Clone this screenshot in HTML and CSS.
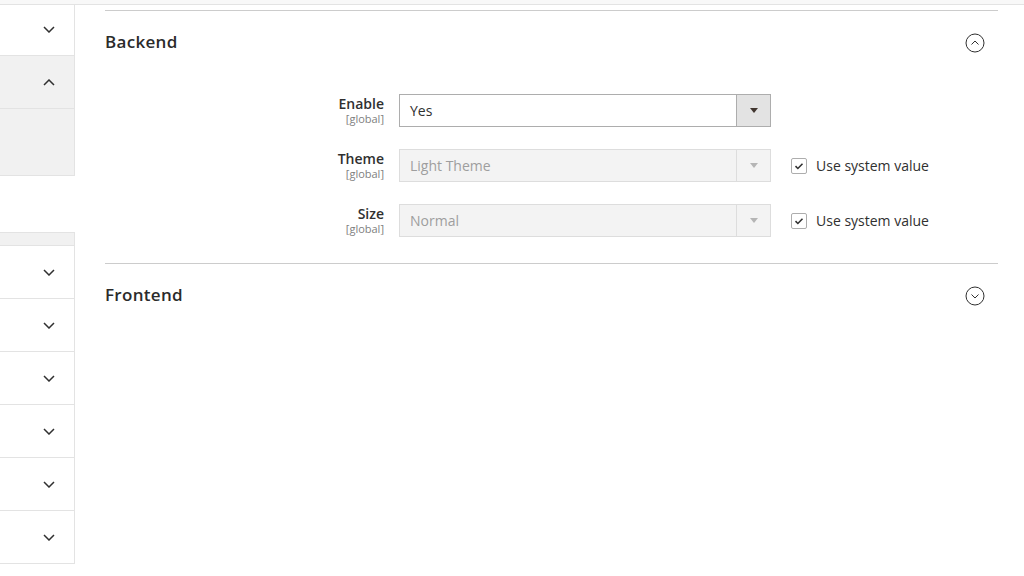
FILE: index.html
```html
<!DOCTYPE html>
<html lang="en">
<head>
<meta charset="utf-8">
<title>Config</title>
<link rel="stylesheet" href="styles.css">
</head>
<body>
<div class="topbar"></div>
<div class="layout">
  <aside class="sidebar">
    <div class="nav-item"><svg class="chev" viewBox="0 0 12 7"><path d="M1 1l5 5 5-5"/></svg></div>
    <div class="nav-item active"><svg class="chev" viewBox="0 0 12 7"><path d="M1 6l5-5 5 5"/></svg></div>
    <div class="nav-sub"></div>
    <div class="nav-gap"></div>
    <div class="nav-head"></div>
    <div class="nav-item"><svg class="chev" viewBox="0 0 12 7"><path d="M1 1l5 5 5-5"/></svg></div>
    <div class="nav-item"><svg class="chev" viewBox="0 0 12 7"><path d="M1 1l5 5 5-5"/></svg></div>
    <div class="nav-item"><svg class="chev" viewBox="0 0 12 7"><path d="M1 1l5 5 5-5"/></svg></div>
    <div class="nav-item"><svg class="chev" viewBox="0 0 12 7"><path d="M1 1l5 5 5-5"/></svg></div>
    <div class="nav-item"><svg class="chev" viewBox="0 0 12 7"><path d="M1 1l5 5 5-5"/></svg></div>
    <div class="nav-item"><svg class="chev" viewBox="0 0 12 7"><path d="M1 1l5 5 5-5"/></svg></div>
  </aside>
  <main class="main">
    <section class="section">
      <div class="section-head">
        <span class="section-title">Backend</span>
        <svg class="circle-icon" viewBox="0 0 20 20"><circle cx="10" cy="10" r="9"/><path d="M6.5 11.5l3.5-3.5 3.5 3.5"/></svg>
      </div>
      <div class="fields">
        <div class="field">
          <div class="label"><span class="label-text">Enable</span><span class="scope">[global]</span></div>
          <div class="select"><span class="select-value">Yes</span><span class="select-btn"><span class="tri"></span></span></div>
          <div class="control-extra"></div>
        </div>
        <div class="field">
          <div class="label"><span class="label-text">Theme</span><span class="scope">[global]</span></div>
          <div class="select disabled"><span class="select-value">Light Theme</span><span class="select-btn"><span class="tri"></span></span></div>
          <label class="control-extra"><span class="checkbox"><svg viewBox="0 0 16 16"><path d="M4 8.2l2.7 2.6L12 5.4"/></svg></span><span class="check-label">Use system value</span></label>
        </div>
        <div class="field">
          <div class="label"><span class="label-text">Size</span><span class="scope">[global]</span></div>
          <div class="select disabled"><span class="select-value">Normal</span><span class="select-btn"><span class="tri"></span></span></div>
          <label class="control-extra"><span class="checkbox"><svg viewBox="0 0 16 16"><path d="M4 8.2l2.7 2.6L12 5.4"/></svg></span><span class="check-label">Use system value</span></label>
        </div>
      </div>
    </section>
    <section class="section">
      <div class="section-head">
        <span class="section-title">Frontend</span>
        <svg class="circle-icon" viewBox="0 0 20 20"><circle cx="10" cy="10" r="9"/><path d="M6.5 8.5l3.5 3.5 3.5-3.5"/></svg>
      </div>
    </section>
  </main>
</div>
</body>
</html>
```

FILE: styles.css
```css
* { box-sizing: border-box; }
html, body { margin: 0; padding: 0; background: #fff; }
body {
  font-family: "Open Sans", "Liberation Sans", sans-serif;
  color: #303030;
  width: 1024px;
  height: 576px;
  overflow: hidden;
}
.topbar {
  height: 5px;
  background: #f8f8f8;
  border-bottom: 1px solid #e3e3e3;
}
.layout {
  display: flex;
  align-items: flex-start;
}
.sidebar {
  width: 75px;
  flex: none;
  display: flex;
  flex-direction: column;
}
.nav-item {
  height: 53px;
  border-right: 1px solid #e3e3e3;
  border-bottom: 1px solid #e3e3e3;
  background: #fff;
  display: flex;
  align-items: center;
  justify-content: flex-end;
  padding-right: 19px;
}
.nav-item:first-child { height: 51px; padding-bottom: 2px; }
.nav-item.active { background: #f1f1f1; }
.nav-sub {
  height: 67px;
  background: #f1f1f1;
  border-right: 1px solid #e3e3e3;
  border-bottom: 1px solid #e3e3e3;
}
.nav-gap { height: 56px; }
.nav-head {
  height: 14px;
  background: #f1f1f1;
  border-top: 1px solid #e3e3e3;
  border-right: 1px solid #e3e3e3;
  border-bottom: 1px solid #e3e3e3;
}
.chev {
  width: 12px;
  height: 7px;
  fill: none;
  stroke: #303030;
  stroke-width: 1.5;
}
.main {
  flex: 1;
  padding: 5px 26px 0 30px;
}
.section {
  border-top: 1px solid #cccccc;
}
.section-head {
  height: 62px;
  display: flex;
  align-items: center;
  justify-content: space-between;
  padding-right: 13px;
}
.section-title {
  font-size: 17px;
  font-weight: 600;
  line-height: 20px;
  letter-spacing: 0.3px;
  color: #2b2b2b;
}
.circle-icon {
  width: 20px;
  height: 20px;
  fill: none;
  stroke: #303030;
  stroke-width: 1;
  margin-top: 2px;
}
.fields {
  padding: 21px 0 26px;
  display: flex;
  flex-direction: column;
  gap: 22px;
}
.field {
  display: grid;
  grid-template-columns: 279px 372px auto;
  column-gap: 15px;
  align-items: start;
}
.label {
  display: flex;
  flex-direction: column;
  align-items: flex-end;
  text-align: right;
  padding-top: 1px;
}
.label-text {
  font-size: 14px;
  font-weight: 600;
  line-height: 18px;
  color: #303030;
}
.scope {
  font-size: 11px;
  line-height: 12px;
  color: #808080;
}
.select {
  height: 33px;
  border: 1px solid #adadad;
  background: #fff;
  display: flex;
  align-items: stretch;
}
.select-value {
  flex: 1;
  font-size: 14px;
  line-height: 31px;
  padding-left: 10px;
  color: #303030;
}
.select-btn {
  width: 34px;
  border-left: 1px solid #adadad;
  background: #e3e3e3;
  display: flex;
  align-items: center;
  justify-content: center;
}
.tri {
  width: 0;
  height: 0;
  border-left: 4px solid transparent;
  border-right: 4px solid transparent;
  border-top: 5px solid #41362f;
}
.select.disabled {
  background: #f3f3f3;
  border-color: #dddddd;
}
.select.disabled .select-value { color: #9e9e9e; }
.select.disabled .select-btn {
  background: #f3f3f3;
  border-left-color: #dddddd;
}
.select.disabled .tri { border-top-color: #b5b5b5; }
.control-extra {
  display: flex;
  align-items: center;
  height: 33px;
  padding-left: 5px;
  gap: 9px;
}
.checkbox {
  width: 16px;
  height: 16px;
  border: 1px solid #adadad;
  border-radius: 2px;
  background: #fff;
  display: flex;
}
.checkbox svg {
  width: 14px;
  height: 14px;
  fill: none;
  stroke: #303030;
  stroke-width: 1.8;
}
.check-label {
  font-size: 14px;
  color: #303030;
}
```
